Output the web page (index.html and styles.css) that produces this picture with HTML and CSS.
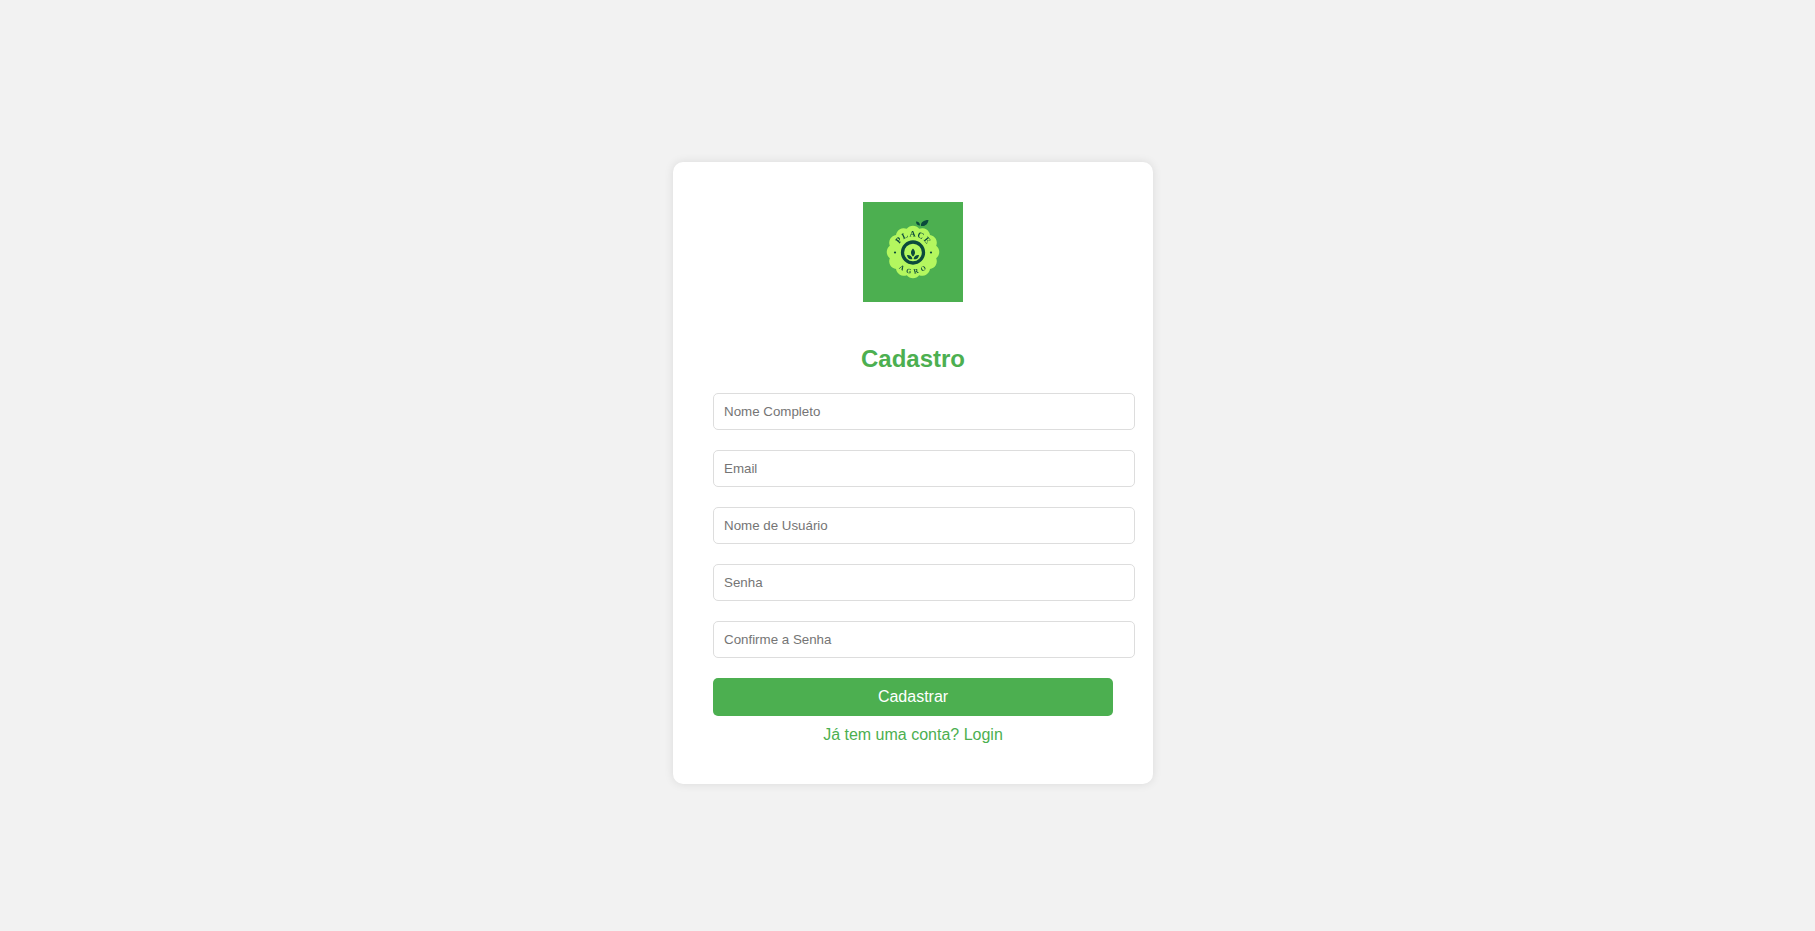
FILE: index.html
```html
<!DOCTYPE html>
<html lang="pt-BR">
<head>
<meta charset="utf-8">
<title>Cadastro</title>
<link rel="stylesheet" href="styles.css">
</head>
<body>
<main class="card">
  <div class="logo-wrap">
    <svg class="logo" viewBox="0 0 100 100" width="100" height="100" aria-label="Place Agro">
      <rect width="100" height="100" fill="#4caf50"/>
      <defs>
        <path id="logo-arc-top" d="M34 50.500A16 16 0 0 1 66 50.500"/>
        <path id="logo-arc-bottom" d="M29 50.500A21 21 0 0 0 71 50.500"/>
      </defs>
      <g class="logo-mark">
        <path fill="#b4f75f" d="M56.21 26.82A7.800 7.800 0 0 1 66.97 33.03A7.800 7.800 0 0 1 73.18 43.79A7.800 7.800 0 0 1 73.18 56.21A7.800 7.800 0 0 1 66.97 66.97A7.800 7.800 0 0 1 56.21 73.18A7.800 7.800 0 0 1 43.79 73.18A7.800 7.800 0 0 1 33.03 66.97A7.800 7.800 0 0 1 26.82 56.21A7.800 7.800 0 0 1 26.82 43.79A7.800 7.800 0 0 1 33.03 33.03A7.800 7.800 0 0 1 43.79 26.82A7.800 7.800 0 0 1 56.21 26.82Z"/>
        <path fill="#0b4a3c" d="M58 24C57.500 20.500 60.500 18 65.500 18C65 22 62.500 24.500 58 24ZM57 23.500C54.500 23.500 53 22 53 19.500C55.500 19.500 57 21 57 23.500Z"/>
        <circle cx="50" cy="50.500" r="10.500" fill="none" stroke="#0b4a3c" stroke-width="3.300"/>
        <path fill="#0b4a3c" d="M50 54.500C47.200 52 47.400 49 50 46.500C52.600 49 52.800 52 50 54.500ZM49.400 57C46.800 58 44.400 56.500 44 53C46.800 52.700 48.900 54.200 49.400 57ZM50.600 57C53.200 58 55.600 56.500 56 53C53.200 52.700 51.100 54.200 50.600 57Z"/>
        <circle cx="32" cy="50.500" r="1.100" fill="#0b4a3c"/>
        <circle cx="68" cy="50.500" r="1.100" fill="#0b4a3c"/>
        <text class="logo-place"><textPath href="#logo-arc-top" startOffset="51%">PLACE</textPath></text>
        <text class="logo-agro"><textPath href="#logo-arc-bottom" startOffset="52%">AGRO</textPath></text>
      </g>
    </svg>
  </div>
  <h2 class="title">Cadastro</h2>
  <form class="form">
    <input class="field" type="text" placeholder="Nome Completo">
    <input class="field" type="email" placeholder="Email">
    <input class="field" type="text" placeholder="Nome de Usuário">
    <input class="field" type="password" placeholder="Senha">
    <input class="field" type="password" placeholder="Confirme a Senha">
    <button class="submit" type="button">Cadastrar</button>
  </form>
  <p class="login"><a class="login-link" href="#">Já tem uma conta? Login</a></p>
</main>
</body>
</html>
```

FILE: styles.css
```css
html, body {
  margin: 0;
  height: 100%;
}

body {
  box-sizing: border-box;
  display: flex;
  align-items: center;
  justify-content: center;
  min-height: 100vh;
  padding: 15px 0 0 11px;
  overflow: hidden;
  background: #f2f2f2;
  font-family: "Liberation Sans", Arial, sans-serif;
}

.card {
  box-sizing: border-box;
  width: 480px;
  height: 622px;
  padding: 40px;
  background: #fff;
  border-radius: 10px;
  box-shadow: 0 0 10px rgba(0, 0, 0, 0.1);
}

.logo-wrap {
  display: flex;
  justify-content: center;
}

.logo {
  display: block;
  width: 100px;
  height: 100px;
}

.logo-mark {
  filter: blur(0.3px);
}

.logo-place,
.logo-agro {
  fill: #0b4a3c;
  font-family: "Liberation Serif", serif;
  font-weight: 700;
  text-anchor: middle;
}

.logo-place {
  font-size: 8.5px;
  letter-spacing: 1px;
}

.logo-agro {
  font-size: 6.5px;
  letter-spacing: 3.5px;
}

.title {
  margin: 43px 0 20px;
  color: #4caf50;
  font-size: 24px;
  line-height: 28px;
  font-weight: 700;
  text-align: center;
}

.form {
  display: flex;
  flex-direction: column;
  align-items: flex-start;
  gap: 20px;
}

.field {
  box-sizing: border-box;
  width: 422px;
  height: 37px;
  padding: 10px;
  border: 1px solid #ddd;
  border-radius: 5px;
  font-family: "Liberation Sans", Arial, sans-serif;
  font-size: 13.333px;
}

.field::placeholder {
  color: #757575;
}

.submit {
  width: 400px;
  height: 38px;
  padding: 10px;
  border: 0;
  border-radius: 5px;
  background: #4caf50;
  color: #fff;
  font-family: "Liberation Sans", Arial, sans-serif;
  font-size: 16px;
}

.login {
  margin: 10px 0 0;
  text-align: center;
  font-size: 16px;
  line-height: 18px;
}

.login-link {
  color: #4caf50;
  text-decoration: none;
}
```
